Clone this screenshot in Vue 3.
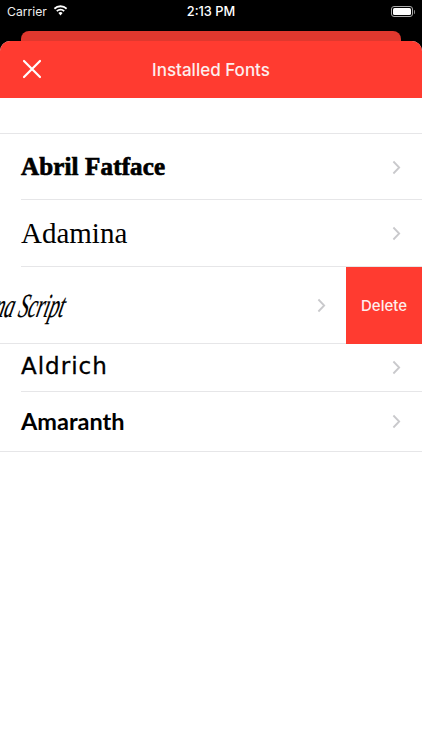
<script setup>
const fontRows = [
  { name: 'Abril Fatface', cls: 'abril' },
  { name: 'Adamina', cls: 'adamina' },
  { name: 'Aguafina Script', cls: 'aguafina', swiped: true },
  { name: 'Aldrich', cls: 'aldrich' },
  { name: 'Amaranth', cls: 'amaranth' },
]
</script>

<template>
  <div class="screen">
    <div class="status">
      <div class="status-left">
        <span>Carrier</span>
        <svg class="wifi" width="15" height="11" viewBox="0 0 16 12">
          <path d="M8 2.4c2.3 0 4.4.9 6 2.4l1.3-1.4A10.5 10.5 0 0 0 8 .4 10.5 10.5 0 0 0 .7 3.4L2 4.8a8.7 8.7 0 0 1 6-2.4z" fill="#fff"/>
          <path d="M8 6c1.3 0 2.5.5 3.4 1.3l1.3-1.4A6.9 6.9 0 0 0 8 4a6.9 6.9 0 0 0-4.7 1.9l1.3 1.4C5.5 6.5 6.7 6 8 6z" fill="#fff"/>
          <path d="M8 7.7c-.9 0-1.7.3-2.3.9L8 11.4l2.3-2.8c-.6-.6-1.4-.9-2.3-.9z" fill="#fff"/>
        </svg>
      </div>
      <span class="time">2:13 PM</span>
      <div class="battery">
        <div class="battery-body"><div class="battery-fill"></div></div>
        <div class="battery-cap"></div>
      </div>
    </div>

    <div class="stack">
      <div class="back-sheet"></div>
      <div class="sheet">
        <header class="nav">
          <svg class="close" width="20" height="20" viewBox="0 0 20 20">
            <path d="M2 2 18 18M18 2 2 18" stroke="#fff" stroke-width="2.2" stroke-linecap="round" fill="none"/>
          </svg>
          <h1 class="title">Installed Fonts</h1>
        </header>
        <div class="list">
          <div class="spacer"></div>
          <div
            v-for="row in fontRows"
            :key="row.name"
            class="row"
            :class="[row.cls, { swiped: row.swiped }]"
          >
            <div class="row-content">
              <span class="name">{{ row.name }}</span>
              <svg class="chevron" width="9" height="15" viewBox="0 0 9 15">
                <path d="M1.4 1.5 7.2 7.5 1.4 13.5" stroke="#c9c9cc" stroke-width="1.8" fill="none"/>
              </svg>
            </div>
            <div v-if="row.swiped" class="delete">Delete</div>
          </div>
        </div>
      </div>
    </div>
  </div>
</template>

<style>
html, body { margin: 0; background: #fff; }
</style>

<style scoped>
.screen {
  width: 422px;
  height: 750px;
  overflow: hidden;
  background: #000;
  display: flex;
  flex-direction: column;
  font-family: Inter, "Liberation Sans", sans-serif;
}
.status {
  flex: none;
  height: 31px;
  box-sizing: border-box;
  display: grid;
  grid-template-columns: 1fr auto 1fr;
  align-items: center;
  color: #fff;
  padding: 0 7px 8px 7px;
}
.status-left { display: flex; align-items: center; gap: 6px; font-size: 12.2px; color: #eee; }
.wifi { margin-top: -3px; }
.time { font-weight: 500; font-size: 12.8px; }
.battery { justify-self: end; display: flex; align-items: center; gap: 1px; }
.battery-body {
  width: 18px;
  height: 7px;
  border: 1px solid #aaa;
  border-radius: 3px;
  padding: 1px;
  box-sizing: content-box;
}
.battery-fill { width: 100%; height: 100%; background: #fff; border-radius: 1.5px; }
.battery-cap { width: 1.5px; height: 4px; background: #888; border-radius: 0 1px 1px 0; }
.stack { flex: 1; display: flex; flex-direction: column; }
.back-sheet {
  height: 10px;
  flex: none;
  margin: 0 21px;
  background: #e0382e;
  border-radius: 8px 8px 0 0;
}
.sheet {
  flex: 1;
  background: #fff;
  border-radius: 10px 10px 0 0;
  overflow: hidden;
}
.nav {
  height: 57px;
  background: #ff3b30;
  display: flex;
  align-items: center;
  justify-content: center;
  position: relative;
}
.close { position: absolute; left: 22px; top: 18px; }
.title {
  margin: 0;
  color: #fdeeed;
  font-size: 17px;
  font-weight: 500;
  line-height: 58px;
}
.spacer { height: 36px; border-bottom: 1px solid #e6e6e8; box-sizing: border-box; }
.row {
  display: flex;
  overflow: hidden;
  background: #fff;
  position: relative;
}
.row::after {
  content: "";
  position: absolute;
  left: 21px;
  right: 0;
  bottom: 0;
  height: 1px;
  background: #e6e6e8;
}
.row-content {
  flex: none;
  width: 422px;
  box-sizing: border-box;
  padding: 0 21px;
  display: flex;
  align-items: center;
  justify-content: space-between;
}
.name { color: #000; white-space: nowrap; }
.abril { height: 66px; }
.abril .name {
  font-family: "Liberation Serif", serif;
  font-weight: 700;
  font-size: 25px;
  -webkit-text-stroke: 0.7px #000;
  letter-spacing: 0.15px;
}
.adamina { height: 67px; }
.adamina .name { font-family: "Liberation Serif", serif; font-size: 29px; }
.aguafina { height: 77px; }
.aguafina::after { left: 0; }
.swiped .row-content { margin-left: -76px; padding-right: 20px; }
.aguafina .name {
  display: inline-block;
  font-family: "Liberation Serif", serif;
  font-style: italic;
  font-size: 34px;
  transform: skewX(-14deg) scaleX(0.58);
  transform-origin: 0 50%;
  letter-spacing: -0.5px;
  margin-right: -60px;
  -webkit-text-stroke: 0.2px #000;
}
.delete {
  flex: none;
  width: 76px;
  background: #ff3b30;
  color: #fdeeed;
  font-size: 15px;
  font-weight: 500;
  display: flex;
  align-items: center;
  justify-content: center;
  z-index: 1;
}
.aldrich { height: 48px; }
.aldrich .row-content { padding-bottom: 2px; }
.aldrich .name {
  font-family: "DejaVu Sans", sans-serif;
  font-size: 23px;
  letter-spacing: 1px;
  -webkit-text-stroke: 0.3px #000;
  margin-bottom: 2px;
}
.amaranth { height: 60px; }
.amaranth .row-content { padding-bottom: 2px; }
.amaranth::after { left: 0; }
.amaranth .name { font-family: Lato, sans-serif; font-weight: 700; font-size: 23.5px; }
</style>
